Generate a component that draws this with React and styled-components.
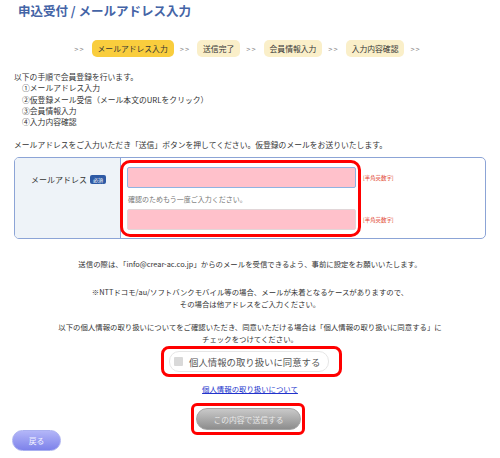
import React from 'react'
import styled, { createGlobalStyle } from 'styled-components'

const Global = createGlobalStyle`
body {
  margin: 0;
  background: #ffffff;
  font-family: "Noto Sans CJK JP", "Noto Sans", sans-serif;
  color: #333333;
}
`

const Page = styled.div`
width: 500px;
height: 458px;
padding: 2px 14px 0;
box-sizing: border-box;
position: relative;
`

const Title = styled.h1`
margin: 0 0 0 4px;
font-size: 12.5px;
line-height: 17px;
font-weight: bold;
color: #4464a6;
`

const Steps = styled.div`
display: flex;
align-items: center;
justify-content: center;
margin-top: 21px;
margin-left: -4px;
`

const Arrow = styled.span`
font-size: 7.5px;
color: #888888;
letter-spacing: 1px;
margin: 0 7px 0 6px;
`

const Step = styled.span`
display: inline-flex;
align-items: center;
height: 17px;
padding: 0 6px;
border-radius: 5px;
font-size: 7.8px;
color: #333333;
background: ${p => (p.$active ? '#f9cd3d' : '#faefc9')};
`

const Intro = styled.div`
margin-top: 14px;
font-size: 7.8px;
line-height: 11.3px;
`

const Indent = styled.div`
padding-left: 8px;
`

const Lead = styled.p`
margin: 12px 0 0;
font-size: 7.8px;
line-height: 12px;
`

const FormTable = styled.div`
display: grid;
grid-template-columns: 106px 1fr;
margin-top: 6px;
border: 1px solid #8ca4d6;
border-radius: 5px;
overflow: hidden;
height: 82px;
box-sizing: border-box;
`

const HeadCell = styled.div`
background: #eef3f8;
border-right: 1px solid #8ca4d6;
padding: 16px 0 0 16px;
font-size: 8px;
color: #333333;
display: flex;
align-items: flex-start;
gap: 3px;
`

const Badge = styled.span`
display: inline-block;
background: #2e5aa5;
color: #ffffff;
font-size: 5px;
line-height: 9px;
padding: 0 3px;
border-radius: 2px;
margin-top: 1px;
`

const BodyCell = styled.div`
position: relative;
padding: 9px 0 0 6px;
`

const FieldRow = styled.div`
display: flex;
align-items: center;
`

const Input = styled.div`
width: 229px;
height: 21px;
box-sizing: border-box;
background: #ffc1cb;
border: 1px solid ${p => (p.$focus ? '#8fb3e2' : '#e2d6d8')};
border-radius: 2px;
`

const Suffix = styled.span`
margin-left: 7px;
font-size: 5.4px;
color: #e0402a;
`

const Note = styled.div`
height: 21px;
display: flex;
align-items: center;
padding-left: 1px;
font-size: 7px;
color: #777777;
`

const Highlight = styled.div`
position: absolute;
border: 3px solid #ff0000;
border-radius: ${p => p.$r || 10}px;
pointer-events: none;
box-sizing: border-box;
`

const Notice = styled.p`
margin: ${p => p.$top || 0}px 0 0;
text-align: center;
font-size: 7.4px;
line-height: 12px;
color: #333333;
`

const AgreeWrap = styled.div`
position: relative;
display: flex;
justify-content: center;
margin-top: 6px;
`

const Agree = styled.label`
display: flex;
align-items: center;
gap: 6px;
width: 160px;
height: 21px;
box-sizing: border-box;
padding-left: 4px;
background: #ffffff;
border: 1px solid #e6e6e6;
border-radius: 10px;
font-size: 9.4px;
color: #555555;
margin-left: -2px;
`

const Box = styled.span`
width: 9px;
height: 9px;
background: #d9d9d9;
border-radius: 1px;
`

const PolicyLink = styled.a`
display: block;
width: max-content;
margin: 11px auto 0;
font-size: 7.4px;
line-height: 11px;
color: #2233cc;
text-decoration: underline;
`

const SubmitWrap = styled.div`
position: relative;
display: flex;
justify-content: center;
margin-top: 14px;
`

const PillButton = styled.button`
display: block;
height: 22px;
box-sizing: border-box;
border-radius: 11px;
font-family: inherit;
font-size: 7.8px;
padding: 0;
`

const Submit = styled(PillButton)`
width: 105px;
margin-left: -3px;
border: 1px solid #a5a5a5;
color: #e8e8e8;
background: linear-gradient(#c9c9c9, #8d8d8d);
`

const Back = styled(PillButton)`
width: 49px;
height: 21px;
margin: 0 0 0 -2px;
border: 1px solid #aab0f0;
color: #f4f4ff;
background: linear-gradient(#b3b6f8, #7d82ea);
`

export default function App() {
  return (
    <Page>
      <Global />
      <Title>申込受付 / メールアドレス入力</Title>
      <Steps>
        <Arrow>&gt;&gt;</Arrow>
        <Step $active>メールアドレス入力</Step>
        <Arrow>&gt;&gt;</Arrow>
        <Step>送信完了</Step>
        <Arrow>&gt;&gt;</Arrow>
        <Step>会員情報入力</Step>
        <Arrow>&gt;&gt;</Arrow>
        <Step>入力内容確認</Step>
        <Arrow>&gt;&gt;</Arrow>
      </Steps>
      <Intro>
        <div>以下の手順で会員登録を行います。</div>
        <Indent>①メールアドレス入力</Indent>
        <Indent>②仮登録メール受信（メール本文のURLをクリック）</Indent>
        <Indent>③会員情報入力</Indent>
        <Indent>④入力内容確認</Indent>
      </Intro>
      <Lead>メールアドレスをご入力いただき「送信」ボタンを押してください。仮登録のメールをお送りいたします。</Lead>
      <FormTable>
        <HeadCell>
          メールアドレス<Badge>必須</Badge>
        </HeadCell>
        <BodyCell>
          <FieldRow>
            <Input $focus />
            <Suffix>[半角英数字]</Suffix>
          </FieldRow>
          <Note>確認のためもう一度ご入力ください。</Note>
          <FieldRow>
            <Input />
            <Suffix>[半角英数字]</Suffix>
          </FieldRow>
          <Highlight style={{ left: -1, top: 2, width: 241, height: 77 }} />
        </BodyCell>
      </FormTable>
      <Notice $top={19}>送信の際は、「info@crear-ac.co.jp」からのメールを受信できるよう、事前に設定をお願いいたします。</Notice>
      <Notice $top={16}>
        ※NTTドコモ/au/ソフトバンクモバイル等の場合、メールが未着となるケースがありますので、<br />
        その場合は他アドレスをご入力ください。
      </Notice>
      <Notice $top={11}>
        以下の個人情報の取り扱いについてをご確認いただき、同意いただける場合は「個人情報の取り扱いに同意する」に<br />
        チェックをつけてください。
      </Notice>
      <AgreeWrap>
        <Agree>
          <Box />
          個人情報の取り扱いに同意する
        </Agree>
        <Highlight $r={8} style={{ left: 147, top: -5, width: 181, height: 31 }} />
      </AgreeWrap>
      <PolicyLink href="#">個人情報の取り扱いについて</PolicyLink>
      <SubmitWrap>
        <Submit>この内容で送信する</Submit>
        <Highlight $r={6} style={{ left: 177, top: -5, width: 114, height: 32 }} />
      </SubmitWrap>
      <Back>戻る</Back>
    </Page>
  )
}
